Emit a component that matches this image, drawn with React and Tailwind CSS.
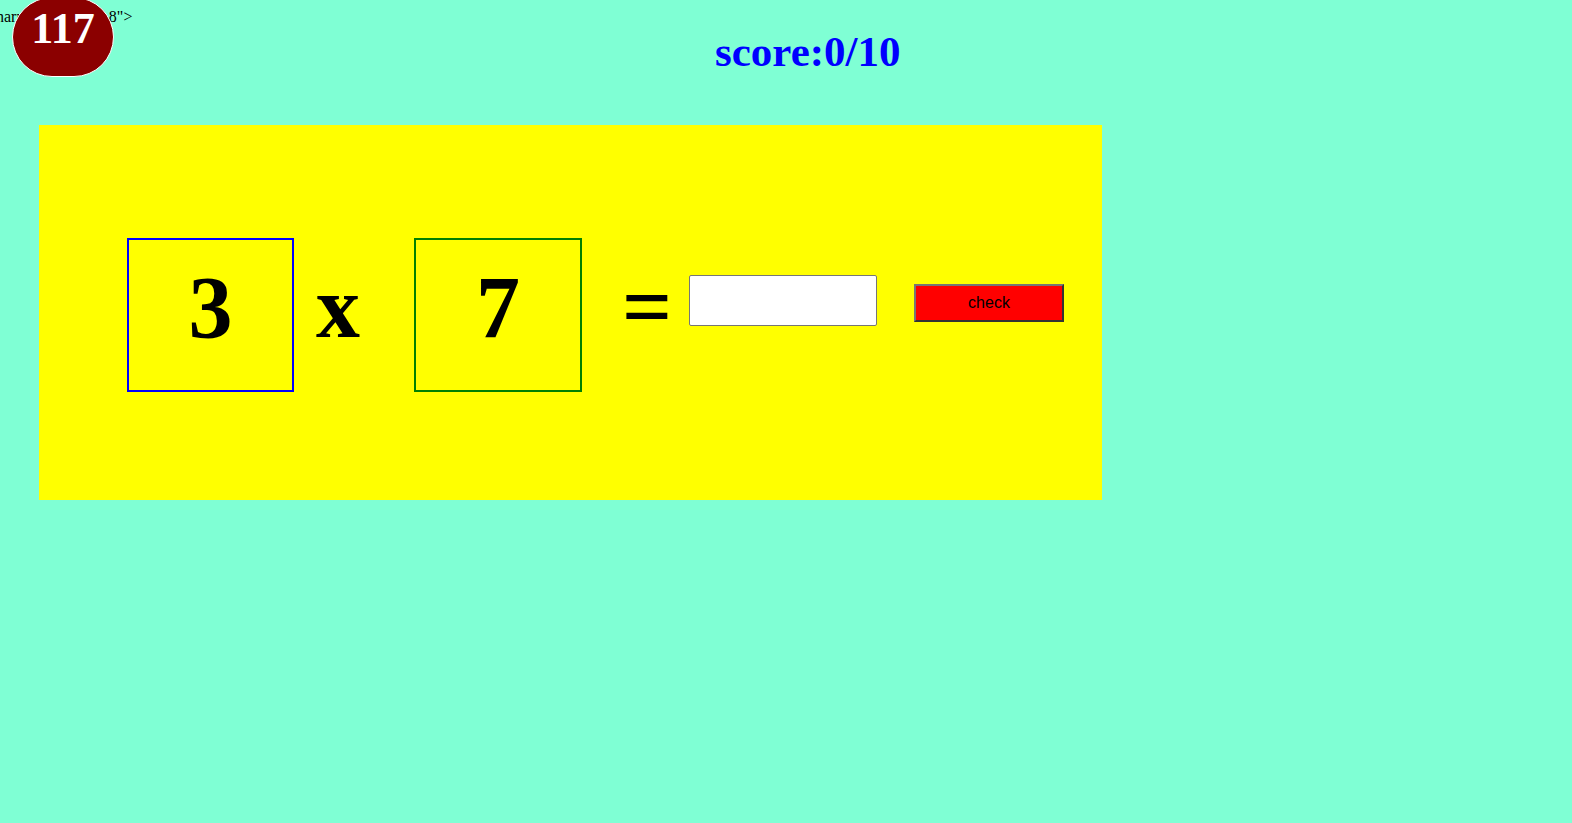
import React, { useState } from 'react';

const serif = { fontFamily: '"Liberation Serif", "Times New Roman", serif' };

const App = () => {
  const [answer, setAnswer] = useState('');

  return (
    <div className="min-h-screen w-full overflow-hidden bg-[#7fffd4]" style={serif}>
      <div className="relative h-[125px]">
        <div className="-ml-[4px] pt-[8px] text-[16px] leading-[18px] text-black whitespace-nowrap">
          {'narrow" height=\u00a0\u00a08">'}
        </div>
        <h1 className="mt-[4px] pl-[715px] text-[43px] font-bold leading-none text-[#0000ff]">score:0/10</h1>
        <div className="absolute left-[12px] top-[-3px] flex h-[80px] w-[102px] items-start justify-center rounded-full border border-white bg-[#8b0000] pt-[9px] text-[44px] font-bold leading-none text-white">
          117
        </div>
      </div>

      <div className="ml-[39px] flex h-[375px] w-[1063px] items-start bg-[#ffff00] pl-[88px]">
        <div className="mt-[113px] h-[154px] w-[167px] border-2 border-[#0000ff] pt-[24px] text-center text-[88px] font-bold leading-none text-black">
          3
        </div>
        <span className="ml-[22px] mt-[139px] w-[43px] text-center text-[88px] font-bold leading-none text-black">x</span>
        <div className="ml-[55px] mt-[113px] h-[154px] w-[168px] border-2 border-[#008000] pt-[24px] text-center text-[88px] font-bold leading-none text-black">
          7
        </div>
        <span className="ml-[40px] mt-[139px] w-[50px] text-center text-[88px] font-bold leading-none text-black">=</span>
        <input
          type="text"
          value={answer}
          onChange={(e) => setAnswer(e.target.value)}
          className="ml-[17px] mt-[150px] h-[51px] w-[188px] rounded-[2px] border border-[#767676] bg-white px-2 text-[16px] outline-none"
        />
        <button
          type="button"
          className="ml-[37px] mt-[159px] h-[38px] w-[150px] border-2 border-t-[#767676] border-l-[#767676] border-r-[#333333] border-b-[#333333] bg-[#ff0000] text-[16px] text-black"
          style={{ fontFamily: '"Liberation Sans", Arial, sans-serif' }}
        >
          check
        </button>
      </div>
    </div>
  );
};

export default App;
